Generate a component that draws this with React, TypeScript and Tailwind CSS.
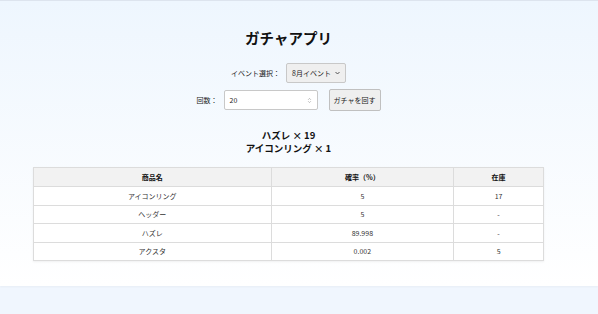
import React from 'react';

const rows = [
    { name: 'アイコンリング', rate: '5', stock: '17' },
    { name: 'ヘッダー', rate: '5', stock: '-' },
    { name: 'ハズレ', rate: '89.998', stock: '-' },
    { name: 'アクスタ', rate: '0.002', stock: '5' },
];

const font = { fontFamily: '"Noto Sans CJK JP", "Noto Sans", sans-serif' };

export default function App() {
    return (
        <div className="min-h-screen bg-[#f0f6fe] border-t border-[#dde4ee]" style={font}>
            <div className="h-[285px] bg-gradient-to-b from-[#eef6fe] to-white shadow-[0_1px_2px_rgba(0,0,0,0.04)] pr-[21px] pt-[27px] flex flex-col items-center text-[#222]">
                <h1 className="text-[14.5px] leading-[20px] font-bold text-[#111]">ガチャアプリ</h1>

                {/* event select */}
                <div className="mt-[15px] flex items-center h-[20px]">
                    <span className="text-[7px] mr-[6px]">イベント選択：</span>
                    <div className="h-[20px] w-[60px] flex items-center justify-between pl-[5px] pr-[5px] bg-[#efefef] border border-[#c8c8c8] rounded-[2px] text-[7px]">
                        <span>8月イベント</span>
                        <svg width="5" height="4" viewBox="0 0 10 6" className="text-[#444]">
                            <path d="M1 1l4 4 4-4" fill="none" stroke="currentColor" strokeWidth="1.8" />
                        </svg>
                    </div>
                </div>

                {/* count + button */}
                <div className="mt-[6px] flex items-center h-[22px]">
                    <span className="text-[7px] mr-[6px]">回数：</span>
                    <div className="h-[20px] w-[94px] flex items-center justify-between pl-[5px] pr-[5px] bg-white border border-[#c8c8c8] rounded-[2px] text-[7px]">
                        <span>20</span>
                        <svg width="5" height="7" viewBox="0 0 6 10" className="text-[#999]">
                            <path d="M1 4l2-2 2 2M1 6l2 2 2-2" fill="none" stroke="currentColor" strokeWidth="0.9" />
                        </svg>
                    </div>
                    <button className="ml-[11px] h-[22px] w-[52px] bg-[#efefef] border border-[#c0c0c0] rounded-[2px] text-[7px] text-[#222]">
                        ガチャを回す
                    </button>
                </div>

                {/* results */}
                <div className="mt-[18px] flex flex-col items-center text-[9.5px] leading-[13px] font-bold text-[#111]">
                    <p>ハズレ × 19</p>
                    <p>アイコンリング × 1</p>
                </div>

                {/* table */}
                <table className="mt-[12px] w-[511px] border-collapse text-[7px] text-[#333] bg-white shadow-[0_1px_2px_rgba(0,0,0,0.06)]">
                    <thead>
                        <tr className="bg-[#f2f2f2] h-[19px]">
                            <th className="w-[238px] border border-[#dcdcdc] font-bold text-[#111]">商品名</th>
                            <th className="w-[183px] border border-[#dcdcdc] font-bold text-[#111]">確率（%）</th>
                            <th className="w-[90px] border border-[#dcdcdc] font-bold text-[#111]">在庫</th>
                        </tr>
                    </thead>
                    <tbody>
                        {rows.map((r) => (
                            <tr key={r.name} className="h-[18.5px]">
                                <td className="border border-[#dcdcdc] text-center">{r.name}</td>
                                <td className="border border-[#dcdcdc] text-center">{r.rate}</td>
                                <td className="border border-[#dcdcdc] text-center">{r.stock}</td>
                            </tr>
                        ))}
                    </tbody>
                </table>
            </div>
        </div>
    );
}
